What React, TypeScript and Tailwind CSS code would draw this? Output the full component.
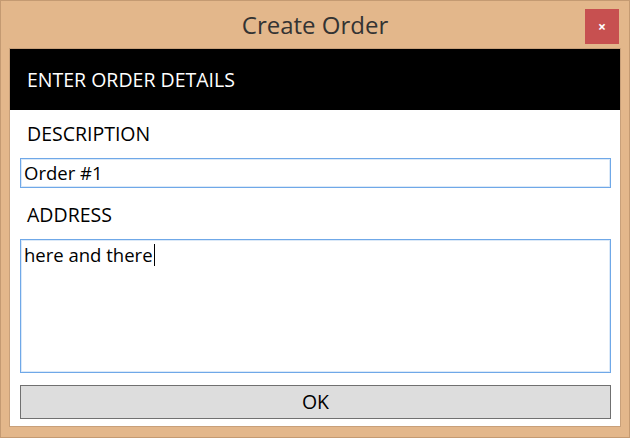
export default function App() {
  return (
    <div
      className="flex h-[438px] w-[630px] flex-col border border-[#c49a72] bg-[#e3b78b]"
      style={{ fontFamily: '"Open Sans", "Noto Sans", sans-serif' }}
    >
      {/* Title bar */}
      <div className="relative flex h-[47px] shrink-0 items-center justify-center">
        <span className="text-[24px] leading-none text-[#333333]">Create Order</span>
        <button className="absolute right-[10px] top-[8px] flex h-[35px] w-[34px] items-center justify-center bg-[#c75050] text-[14px] font-bold leading-none text-white">
          ×
        </button>
      </div>

      {/* Client area */}
      <div className="mx-[8px] mb-[10px] flex flex-1 flex-col border border-[#c8a07a] bg-white">
        <div className="flex h-[61px] shrink-0 items-center bg-black pl-[17px] text-[19.5px] text-white">
          ENTER ORDER DETAILS
        </div>

        <div className="flex h-[48px] shrink-0 items-center pl-[17px] text-[19.5px] text-black">
          DESCRIPTION
        </div>
        <div className="ml-[10px] mr-[9px] flex h-[30px] shrink-0 items-center border border-[#6fa8e8] pl-[3px] text-[18.5px] text-black shadow-[inset_0_0_0_1px_#dbe9f8]">
          Order #1
        </div>

        <div className="flex h-[51px] shrink-0 items-center pl-[17px] pt-[3px] text-[19.5px] text-black">
          ADDRESS
        </div>
        <div className="ml-[10px] mr-[9px] h-[134px] shrink-0 border border-[#6fa8e8] px-[3px] pt-[1px] text-[18.5px] text-black shadow-[inset_0_0_0_1px_#dbe9f8]">
          <span className="inline-flex items-center">
            here and there
            <span className="ml-px inline-block h-[22px] w-px bg-black" />
          </span>
        </div>

        <button className="ml-[10px] mr-[9px] mt-[12px] flex h-[34px] shrink-0 items-center justify-center border border-[#707070] bg-[#dddddd] text-[19.5px] text-black">
          OK
        </button>
      </div>
    </div>
  );
}
